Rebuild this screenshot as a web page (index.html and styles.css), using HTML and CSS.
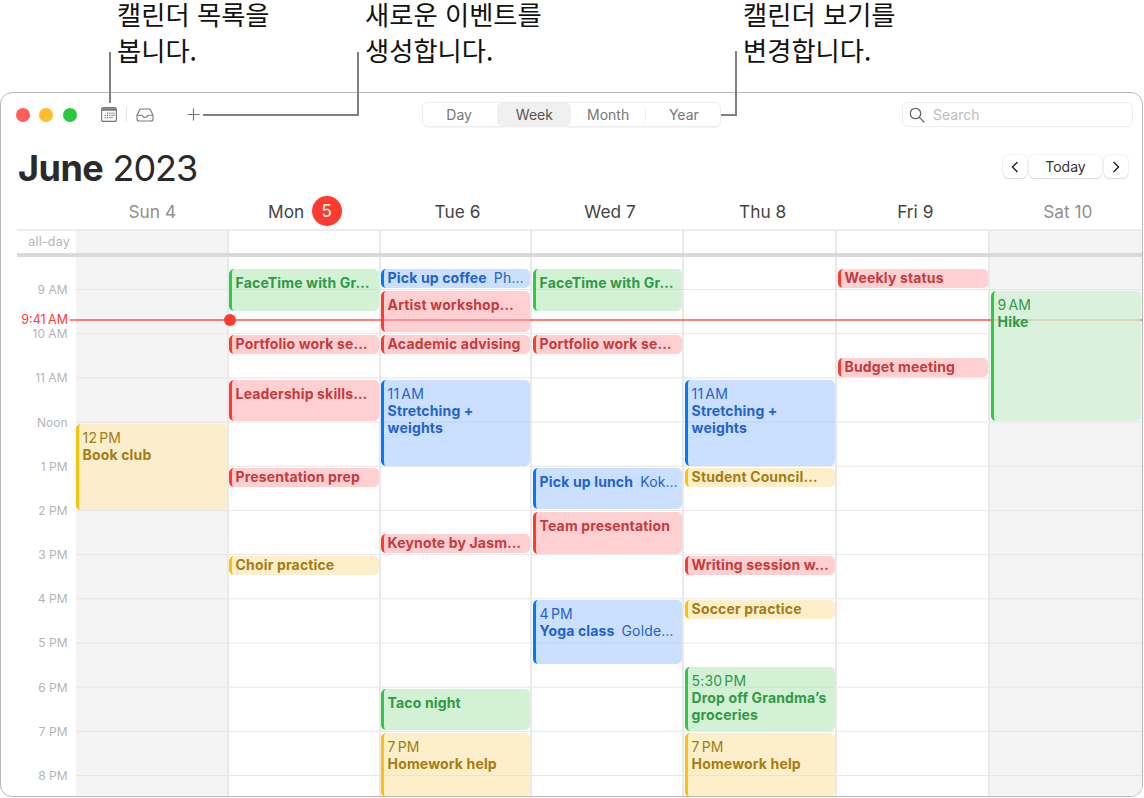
FILE: index.html
```html
<!DOCTYPE html>
<html lang="ko">
<head>
<meta charset="utf-8">
<title>Calendar</title>
<link rel="stylesheet" href="styles.css">
</head>
<body>
<div class="stage">
  <div class="callouts">
    <p class="callout callout-list">캘린더 목록을<br>봅니다.</p>
    <p class="callout callout-new">새로운 이벤트를<br>생성합니다.</p>
    <p class="callout callout-view">캘린더 보기를<br>변경합니다.</p>
  </div>
  <main class="window">
    <header class="toolbar">
      <div class="lights"><span class="light red"></span><span class="light yellow"></span><span class="light green"></span></div>
      <svg class="icon icon-cal" width="16" height="15" viewBox="0 0 16 15"><rect x="0.6" y="0.6" width="14.8" height="13.8" rx="2" fill="#fafafa" stroke="#777" stroke-width="1.1"/><path d="M1 1.2h14v2.6H1z" fill="#777"/><g fill="#777"><rect x="6" y="5.6" width="1.2" height="1.2"/><rect x="8.2" y="5.6" width="1.2" height="1.2"/><rect x="10.4" y="5.6" width="1.2" height="1.2"/><rect x="12.4" y="5.6" width="1.2" height="1.2"/><rect x="3.6" y="7.8" width="1.2" height="1.2"/><rect x="6" y="7.8" width="1.2" height="1.2"/><rect x="8.2" y="7.8" width="1.2" height="1.2"/><rect x="10.4" y="7.8" width="1.2" height="1.2"/><rect x="12.4" y="7.8" width="1.2" height="1.2"/><rect x="3.6" y="10" width="1.2" height="1.2"/><rect x="6" y="10" width="1.2" height="1.2"/><rect x="8.2" y="10" width="1.2" height="1.2"/><rect x="10.4" y="10" width="1.2" height="1.2"/></g></svg>
      <span class="tool-divider"></span>
      <svg class="icon icon-inbox" width="18" height="14" viewBox="0 0 18 14" fill="none" stroke="#777" stroke-width="1.1" stroke-linejoin="round"><path d="M1 7.2 3.6 1.8Q4 1 5 1h8q1 0 1.4.8L17 7.2V11q0 2-2 2H3q-2 0-2-2z"/><path d="M1 7.2h4.6q.7 0 1 .8.5 1.4 2.4 1.4T11.400 8q.3-.8 1-.8H17"/></svg>
      <svg class="icon icon-plus" width="13" height="13" viewBox="0 0 13 13" stroke="#777" stroke-width="1.2"><path d="M6.500 0.500v12M0.500 6.500h12"/></svg>
      <nav class="segments">
        <span class="segment">Day</span>
        <span class="segment active">Week</span>
        <span class="segment month">Month</span>
        <span class="segment">Year</span>
      </nav>
      <div class="search">
        <svg width="16" height="16" viewBox="0 0 16 16" fill="none" stroke="#666" stroke-width="1.300"><circle cx="6.500" cy="6.500" r="5.200"/><path d="m10.400 10.400 4.600 4.600" stroke-linecap="round"/></svg>
        <span>Search</span>
      </div>
    </header>
    <section class="title-row">
      <h1 class="title"><b>June</b> 2023</h1>
      <div class="pager">
        <span class="page-btn arrow"><svg width="8" height="12" viewBox="0 0 8 12" fill="none" stroke="#222" stroke-width="1.400"><path d="M6.500 1 1.500 6l5 5"/></svg></span>
        <span class="page-btn today">Today</span>
        <span class="page-btn arrow"><svg width="8" height="12" viewBox="0 0 8 12" fill="none" stroke="#222" stroke-width="1.400"><path d="M1.500 1l5 5-5 5"/></svg></span>
      </div>
    </section>
    <section class="day-head">
      <span class="head-cell weekend">Sun 4</span>
      <span class="head-cell">Mon <span class="badge">5</span></span>
      <span class="head-cell">Tue 6</span>
      <span class="head-cell">Wed 7</span>
      <span class="head-cell">Thu 8</span>
      <span class="head-cell">Fri 9</span>
      <span class="head-cell weekend">Sat 10</span>
    </section>
    <section class="allday">
      <span class="allday-label">all-day</span>
      <span class="allday-cell off"></span><span class="allday-cell"></span><span class="allday-cell"></span><span class="allday-cell"></span><span class="allday-cell"></span><span class="allday-cell"></span><span class="allday-cell off last"></span>
    </section>
    <section class="week">
      <div class="gutter">
        <span>9 AM</span><span>10 AM</span><span>11 AM</span><span>Noon</span><span>1 PM</span><span>2 PM</span><span>3 PM</span><span>4 PM</span><span>5 PM</span><span>6 PM</span><span>7 PM</span><span>8 PM</span>
      </div>
      <div class="day off">
        <article class="event yellow tall" style="top:167px;height:86px"><span class="time">12 PM</span><b>Book club</b></article>
      </div>
      <div class="day">
        <article class="event green tall" style="top:12px;height:42px"><b>FaceTime with Gr…</b></article>
        <article class="event red" style="top:78px;height:19px"><b>Portfolio work se…</b></article>
        <article class="event red tall" style="top:123px;height:41px"><b>Leadership skills…</b></article>
        <article class="event red" style="top:211px;height:19px"><b>Presentation prep</b></article>
        <article class="event yellow" style="top:299px;height:19px"><b>Choir practice</b></article>
      </div>
      <div class="day">
        <article class="event blue" style="top:12px;height:19px"><b>Pick up coffee</b><span class="place">Ph…</span></article>
        <article class="event red tall" style="top:34px;height:41px"><b>Artist workshop…</b></article>
        <article class="event red" style="top:78px;height:19px"><b>Academic advising</b></article>
        <article class="event blue tall" style="top:123px;height:86px"><span class="time">11 AM</span><b>Stretching +<br>weights</b></article>
        <article class="event red" style="top:277px;height:19px"><b>Keynote by Jasm…</b></article>
        <article class="event green tall" style="top:432px;height:41px"><b>Taco night</b></article>
        <article class="event yellow tall" style="top:476px;height:64px"><span class="time">7 PM</span><b>Homework help</b></article>
      </div>
      <div class="day inset">
        <article class="event green tall" style="top:12px;height:42px"><b>FaceTime with Gr…</b></article>
        <article class="event red" style="top:78px;height:19px"><b>Portfolio work se…</b></article>
        <article class="event blue tall" style="top:211px;height:41px"><b>Pick up lunch</b><span class="place">Kok…</span></article>
        <article class="event red tall" style="top:255px;height:42px"><b>Team presentation</b></article>
        <article class="event blue tall" style="top:343px;height:64px"><span class="time">4 PM</span><b>Yoga class</b><span class="place">Golde…</span></article>
      </div>
      <div class="day inset">
        <article class="event blue tall" style="top:123px;height:86px"><span class="time">11 AM</span><b>Stretching +<br>weights</b></article>
        <article class="event yellow" style="top:211px;height:19px"><b>Student Council…</b></article>
        <article class="event red" style="top:299px;height:19px"><b>Writing session w…</b></article>
        <article class="event yellow" style="top:343px;height:19px"><b>Soccer practice</b></article>
        <article class="event green tall" style="top:410px;height:64px"><span class="time">5:30 PM</span><b>Drop off Grandma’s<br>groceries</b></article>
        <article class="event yellow tall" style="top:476px;height:64px"><span class="time">7 PM</span><b>Homework help</b></article>
      </div>
      <div class="day inset">
        <article class="event red" style="top:12px;height:19px"><b>Weekly status</b></article>
        <article class="event red" style="top:101px;height:19px"><b>Budget meeting</b></article>
      </div>
      <div class="day off inset last">
        <article class="event green tall" style="top:34px;height:130px"><span class="time">9 AM</span><b>Hike</b></article>
      </div>
      <div class="now"><span class="now-label">9:41 AM</span><span class="now-dot"></span></div>
    </section>
  </main>
  <span class="leader leader-list-v"></span>
  <span class="leader leader-new-v"></span>
  <span class="leader leader-new-h"></span>
  <span class="leader leader-view-v"></span>
  <span class="leader leader-view-h"></span>
</div>
</body>
</html>
```
FILE: styles.css
```css
* { box-sizing: border-box; }
html, body { margin: 0; height: 100%; background: #fff; overflow: hidden; }
body { font-family: Inter, "Liberation Sans", sans-serif; color: #333; }
.stage { position: relative; width: 1144px; height: 798px; }

/* Callouts */
.callouts { position: relative; height: 92px; }
.callout {
  position: absolute; top: -4px; margin: 0;
  font-family: "Noto Sans CJK KR", "Noto Sans", sans-serif;
  font-size: 26.300px; line-height: 36px; color: #111; white-space: nowrap;
}
.callout-list { left: 117px; }
.callout-new { left: 365px; }
.callout-view { left: 743px; }
.leader { position: absolute; background: #808080; z-index: 5; }
.leader-list-v { left: 109px; top: 52px; width: 2px; height: 51px; }
.leader-new-v { left: 357px; top: 52px; width: 2px; height: 64px; }
.leader-new-h { left: 203px; top: 114px; width: 156px; height: 2px; }
.leader-view-v { left: 735px; top: 51px; width: 2px; height: 65px; }
.leader-view-h { left: 721px; top: 114px; width: 16px; height: 2px; }

/* Window */
.window {
  width: 1143px; height: 705px;
  border: 1px solid #b8b8b8; border-radius: 12px;
  background: #fff; overflow: hidden;
  display: flex; flex-direction: column;
}
.toolbar { height: 43px; flex: none; display: flex; align-items: center; padding-left: 15px; }
.lights { display: flex; gap: 9.300px; }
.light { width: 14px; height: 14px; border-radius: 50%; }
.light.red { background: #ff5f57; }
.light.yellow { background: #febc2e; }
.light.green { background: #28c840; }
.icon { flex: none; }
.icon-cal { margin-left: 24.400px; }
.tool-divider { width: 1px; height: 15px; background: #e2e2e2; margin-left: 9px; }
.icon-inbox { margin-left: 9px; }
.icon-plus { margin-left: 33px; }
.segments {
  margin-left: 222px; width: 299px; height: 25px; display: flex;
  border: 1px solid #eeeeee; border-radius: 6px;
  box-shadow: 0 0.500px 1px rgba(0,0,0,.04);
}
.segment {
  width: 74.500px; display: flex; align-items: center; justify-content: center;
  font-size: 14px; color: #777; border-radius: 5px;
}
.segment:first-child { padding-right: 2px; }
.segment:last-child { padding-left: 2px; }
.segment.active { background: #f0f0f0; color: #555; }
.segment.month { position: relative; border-right: 1px solid #eee; margin: 3px 0; }
.search {
  margin-left: 181px; width: 231px; height: 25px; display: flex; align-items: center; gap: 8px;
  padding-left: 6px; border: 1px solid #eeeeee; border-radius: 6px;
  font-size: 14px; color: #bdbdbd;
}

.title-row { height: 57px; flex: none; display: flex; align-items: flex-start; justify-content: space-between; padding: 12px 14px 0 17px; }
.title { margin: 0; font-size: 36px; line-height: 40px; font-weight: 400; color: #2a2a2a; letter-spacing: -1px; }
.title b { font-weight: 700; letter-spacing: -0.500px; }
.pager { display: flex; gap: 2px; margin-top: 7px; }
.page-btn {
  height: 23px; display: flex; align-items: center; justify-content: center;
  border-radius: 5px; background: #fff;
  box-shadow: 0 0 0 0.500px rgba(0,0,0,.1), 0 1px 1px rgba(0,0,0,.1);
  font-size: 14px; color: #333;
}
.arrow { width: 24px; }
.today { width: 73px; }

.day-head {
  height: 38px; flex: none; display: grid;
  grid-template-columns: 59px repeat(7, 152.600px);
  margin-left: 16px; border-bottom: 2px solid #ececec;
}
.head-cell { grid-column: span 1; display: flex; align-items: center; justify-content: center; gap: 7.500px; font-size: 17.300px; color: #444; }
.head-cell:first-child { grid-column-start: 2; }
.head-cell.weekend { color: #909090; }
.badge {
  width: 30px; height: 30px; border-radius: 50%; background: #ff3b30; color: #fff;
  display: flex; align-items: center; justify-content: center; font-size: 17px;
}

.allday {
  height: 26px; flex: none; display: grid;
  grid-template-columns: 59px 153px 152px 151px 152px 153px 153px 152px;
  margin-left: 16px; border-bottom: 4px solid #d9d9d9;
}
.allday-label { font-size: 12.500px; letter-spacing: .2px; color: #b4b4b4; text-align: right; padding-right: 6px; line-height: 22px; }
.allday-cell { border-right: 2px solid #e9e9e9; }
.allday-cell.off { background: #f4f4f4; }
.allday-cell.last { border-right: 0; }

.week {
  position: relative; flex: 1; min-height: 0; overflow: hidden; display: grid;
  grid-template-columns: 75px 153px 152px 151px 152px 153px 153px 152px;
}
.gutter {
  padding-top: 10.400px; display: flex; flex-direction: column; align-items: stretch;
}
.gutter span {
  height: 44.200px; flex: none; display: flex; align-items: center; justify-content: flex-end;
  padding-right: 8.500px; font-size: 12px; color: #b4b4b4;
}
.day {
  position: relative; border-right: 2px solid #e9e9e9;
  background-image: linear-gradient(#e6e6e6 1px, transparent 1px);
  background-size: 100% 44.200px; background-position: 0 32px;
}
.day.off { background-color: #f4f4f4; }
.day.last { border-right: 0; }

.event {
  position: absolute; left: 0; right: 0; z-index: 2;
  border-left: 3.500px solid; border-radius: 5px;
  padding: 0 0 0 3.600px; font-size: 14px; letter-spacing: .15px; line-height: 18px; white-space: nowrap; overflow: hidden;
}
.inset .event { left: 1px; }
.last .event { right: 1px; }
.event.tall { padding-top: 4.500px; line-height: 17.500px; }
.event b { font-weight: 700; }
.event .time { display: block; font-weight: 400; line-height: 17px; word-spacing: -2px; }
.event .place { font-weight: 400; margin-left: 7px; }
.event.red { background: rgba(255,161,165,.5); border-color: #ff3b30; color: #c53b3d; }
.event.green { background: rgba(167,227,171,.5); border-color: #28cd41; color: #2f9a47; }
.event.blue { background: rgba(151,191,255,.5); border-color: #007aff; color: #1f63cd; }
.event.yellow { background: rgba(251,223,147,.5); border-color: #ffc00a; color: #a57c12; }
.off .event.yellow { background: rgba(250,236,196,.85); }
.off .event.green { background: rgba(209,240,212,.75); }

.now { position: absolute; left: 69px; right: 0; top: 62px; height: 2px; background: rgba(255,59,48,.65); z-index: 1; }
.now-label { position: absolute; right: 100%; top: -8px; margin-right: 2px; font-size: 12.500px; line-height: 17px; word-spacing: -1px; color: #ff3b30; background: #fff; white-space: nowrap; }
.now-dot { position: absolute; left: 154px; top: -5px; width: 12px; height: 12px; border-radius: 50%; background: #ff3b30; }
```
